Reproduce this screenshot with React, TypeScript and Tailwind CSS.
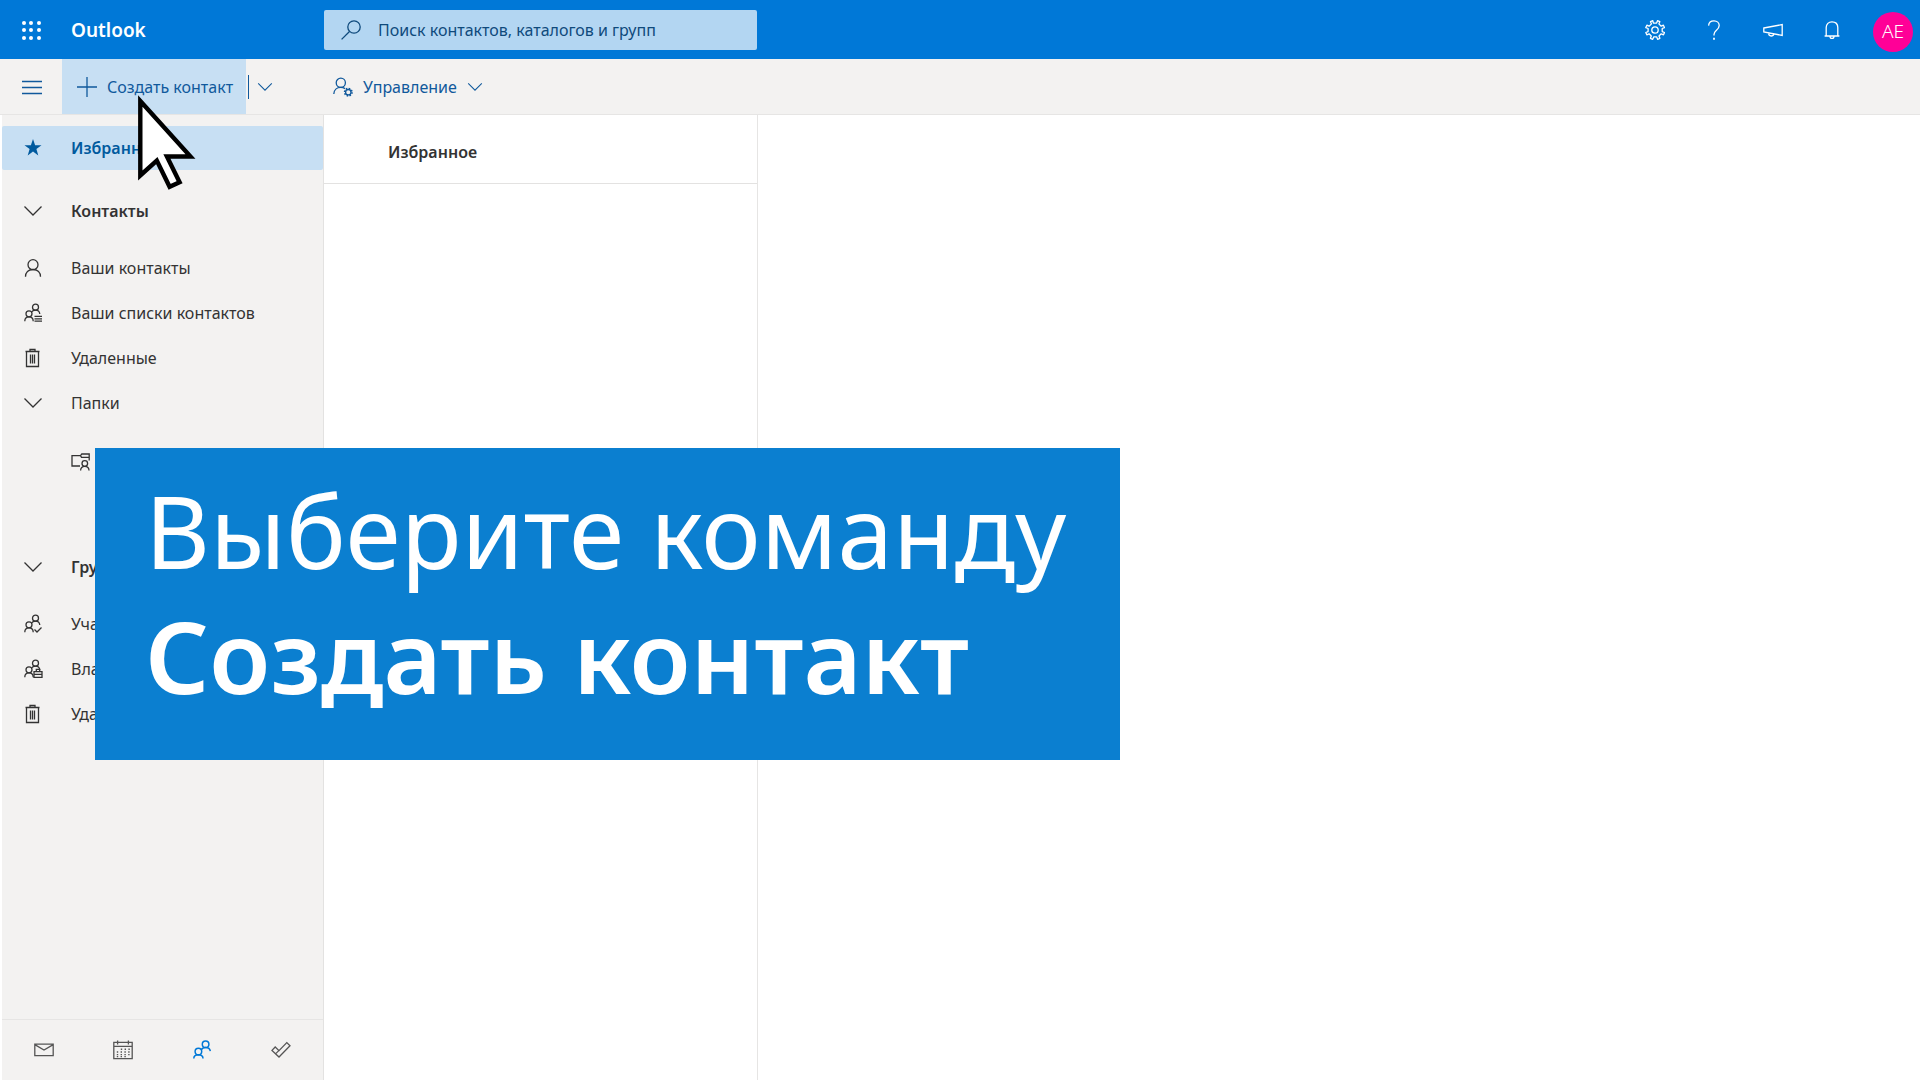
import type { ReactNode } from "react";

function Svg({ children, className = "w-5 h-5" }: { children: ReactNode; className?: string }) {
  return (
    <svg className={`${className} shrink-0`} viewBox="0 0 20 20" fill="none" stroke="currentColor" strokeWidth={1.3} aria-hidden="true">
      {children}
    </svg>
  );
}

const ChevronIcon = ({ className }: { className?: string }) => (
  <Svg className={className}>
    <path d="M1.5 5.5 10 14l8.5-8.5" />
  </Svg>
);

const PersonIcon = () => (
  <Svg>
    <circle cx="10" cy="6.7" r="5" />
    <path d="M2.5 18.8c0-4.2 2.8-7.3 7.5-7.3s7.5 3.1 7.5 7.3" />
  </Svg>
);

// Two overlapping people, shared by several list icons
const PeoplePaths = () => (
  <>
    <circle cx="12.5" cy="4.2" r="3" />
    <circle cx="6" cy="10.8" r="3" />
    <path d="M1.8 18.2c0-2.6 1.6-4.4 4.2-4.4s4.2 1.8 4.2 4.4M8.6 9c.8-1.2 2.2-1.8 3.9-1.8 2.5 0 4 1.4 4.3 3.8" />
  </>
);

const ContactListIcon = () => (
  <Svg>
    <PeoplePaths />
    <path d="M11.5 13.4H19M11.5 15.8H19M11.5 18.2H19" />
  </Svg>
);

const MemberIcon = () => (
  <Svg>
    <PeoplePaths />
    <path d="m11.5 15.5 2.5 2.5 4.5-4.5" />
  </Svg>
);

const OwnerIcon = () => (
  <Svg>
    <PeoplePaths />
    <path d="M11 12.6h8v5.8h-8zM13.3 12.4v-2h3.4v2M11 15.3h8" />
  </Svg>
);

const TrashIcon = () => (
  <Svg>
    <path d="M2.5 3.5h14M7 3.5v-2h5v2M3.5 3.5v15h12v-15M7.5 6.5v9M9.5 6.5v9M11.5 6.5v9" />
  </Svg>
);

const FolderIcon = () => (
  <Svg>
    <path d="M9 14H1V3.6h8.5M9.5 3.6 10.8 2h7.4v6.5M9.5 3.6l1 1.8h7.7" />
    <circle cx="13.8" cy="11.5" r="2.8" />
    <path d="M9.6 18.6c0-2.6 1.6-4.2 4.2-4.2s4.2 1.6 4.2 4.2" />
  </Svg>
);

const StarIcon = () => (
  <svg className="w-5 h-5 shrink-0" viewBox="0 0 20 20" fill="currentColor" aria-hidden="true">
    <path d="m10 1 2.1 6.2h6.4l-5.1 3.9 1.9 6.4-5.3-3.9-5.3 3.9 1.9-6.4-5.1-3.9h6.4z" />
  </svg>
);

const ManageIcon = () => (
  <Svg>
    <circle cx="7.8" cy="5.8" r="4.6" />
    <path d="M.8 17c.2-4 3-6.6 7-6.6 1.6 0 3 .4 4.2 1.2" />
    <circle cx="15.3" cy="15.2" r="2.7" />
    <circle cx="15.3" cy="15.2" r="3.7" strokeWidth={1.6} strokeDasharray="1.5 1.4" />
  </Svg>
);

const SearchIcon = () => (
  <Svg>
    <circle cx="13" cy="7" r="6.2" />
    <path d="M8.5 11.5.6 19.4" />
  </Svg>
);

const GearIcon = () => (
  <Svg>
    <circle cx="10" cy="10" r="3.2" />
    <path
      strokeLinejoin="round"
      d="M8.4 3.1 7.8.7l-2.3 1 1 2.2-2.4 2.3-2.2-1-1.1 2.4 2.3.9v3.1l-2.3.9 1 2.3 2.3-1 2.2 2.2-.9 2.3 2.3 1 1-2.4h3l.9 2.4 2.3-1-.9-2.3 2.2-2.2 2.3 1 1-2.3-2.3-.9V8.5l2.3-.9-1.1-2.4-2.2 1-2.3-2.3.9-2.2-2.3-1-.9 2.4z"
    />
  </Svg>
);

const HelpIcon = () => (
  <Svg>
    <path d="M4.6 5.6C4.8 2.6 7 .8 10 .8s5.2 2 5.2 4.7c0 2.4-1.4 3.6-3 5-1.5 1.3-2.2 2.2-2.2 4.1v1" />
    <path d="M10 17.8v2" strokeWidth={1.8} />
  </Svg>
);

const MegaphoneIcon = () => (
  <Svg>
    <path d="M.8 8 19.2 4.6v10.8L.8 12zM5.6 12.8c0 2 1 3.2 2.6 3.2 1.4 0 2.4-.8 2.6-2.1" />
  </Svg>
);

const BellIcon = () => (
  <Svg>
    <path d="M2.6 16h14.8M4.2 16V7.6C4.2 4 6.6 1.8 10 1.8s5.8 2.2 5.8 5.8V16M8 16.4c0 1.2.8 1.9 2 1.9s2-.7 2-1.9" />
  </Svg>
);

const MailIcon = () => (
  <Svg>
    <path d="M.8 4.2h18.4v11.4H.8zM.8 4.6 10 10l9.2-5.4" />
  </Svg>
);

const CalendarIcon = () => (
  <Svg>
    <path d="M.8 2.4h18.4v16.2H.8zM.8 6.4h18.4M4.6.4v4M15.4.4v4" />
    <path d="M7.8 9.2h9M3.8 12h13M3.8 14.6h13M3.8 16.6h9" strokeDasharray="1.4 2.4" strokeWidth={1.4} />
  </Svg>
);

const PeopleIcon = () => (
  <Svg>
    <g strokeWidth={1.5}>
      <circle cx="13.6" cy="4.2" r="3.3" />
      <circle cx="6.4" cy="11.6" r="3.3" />
      <path d="M1.8 18.6c0-2.4 1.8-3.8 4.6-3.8s4.6 1.4 4.6 3.8M9.4 9.6c.6-1.4 2-2.2 4.2-2.2 2.8 0 4.4 1.2 4.7 3.8" />
    </g>
  </Svg>
);

const TodoIcon = () => (
  <Svg>
    <path d="M1 10.4 4.2 7l3.8 3.6L15.8 2.6 19 5.8 8 17zM4.8 13.6 8 10.4" />
  </Svg>
);

type NavItem = { label: string; icon: ReactNode };

const contactItems: NavItem[] = [
  { label: "Ваши контакты", icon: <PersonIcon /> },
  { label: "Ваши списки контактов", icon: <ContactListIcon /> },
  { label: "Удаленные", icon: <TrashIcon /> },
  { label: "Папки", icon: <ChevronIcon /> },
];

const groupItems: NavItem[] = [
  { label: "Участник", icon: <MemberIcon /> },
  { label: "Владелец", icon: <OwnerIcon /> },
  { label: "Удаленные", icon: <TrashIcon /> },
];

const headerActions: NavItem[] = [
  { label: "Параметры", icon: <GearIcon /> },
  { label: "Справка", icon: <HelpIcon /> },
  { label: "Что нового", icon: <MegaphoneIcon /> },
  { label: "Уведомления", icon: <BellIcon /> },
];

const modules = [
  { label: "Почта", icon: <MailIcon />, active: false },
  { label: "Календарь", icon: <CalendarIcon />, active: false },
  { label: "Люди", icon: <PeopleIcon />, active: true },
  { label: "Задачи", icon: <TodoIcon />, active: false },
];

function NavRow({ label, icon, bold = false }: NavItem & { bold?: boolean }) {
  return (
    <button className={`flex items-center w-full h-[45px] pl-[21px] gap-7 text-left ${bold ? "font-semibold" : ""}`}>
      {icon}
      <span>{label}</span>
    </button>
  );
}

function Header() {
  return (
    <header className="flex items-center h-[59px] bg-[#0078d7] text-white">
      <div className="flex items-center w-[324px] pl-[21px] gap-[30px]">
        <button aria-label="Средство запуска приложений">
          <svg className="w-5 h-5" viewBox="0 0 20 20" fill="currentColor">
            {[3, 10, 18].map((y) => [3, 10, 18].map((x) => <circle key={`${x}-${y}`} cx={x} cy={y} r="2" />))}
          </svg>
        </button>
        <span className="pt-[2px] text-[19px] font-semibold">Outlook</span>
      </div>
      <label className="flex items-center w-[433px] h-10 pl-[17px] gap-[17px] rounded-xs bg-[#b3d6f2] text-[#0f4a7c]">
        <SearchIcon />
        <input
          type="search"
          aria-label="Поиск"
          placeholder="Поиск контактов, каталогов и групп"
          className="flex-1 bg-transparent outline-none placeholder:text-[#0f4a7c]"
        />
      </label>
      <div className="flex items-center ml-auto pr-[7px]">
        {headerActions.map((action) => (
          <button key={action.label} aria-label={action.label} className="flex justify-center w-[59px]">
            {action.icon}
          </button>
        ))}
        <button className="w-10 h-10 mt-1 ml-3 rounded-full bg-[#ff0097] text-[19px] font-light">AE</button>
      </div>
    </header>
  );
}

function CommandBar() {
  return (
    <div className="flex items-center h-14 border-b border-[#e6e5e4] bg-[#f3f2f1] text-[#10599c]">
      <button aria-label="Меню" className="flex justify-center w-[62px] pl-px">
        <Svg>
          <path d="M0 4.5h20M0 10.5h20M0 16.5h20" />
        </Svg>
      </button>
      <button className="flex items-center w-[184px] h-full pl-[15px] gap-[10px] bg-[#c7dff3]">
        <Svg>
          <path d="M10 0v20M0 10h20" />
        </Svg>
        Создать контакт
      </button>
      <button aria-label="Другие варианты" className="flex items-center h-6 ml-[2px] pl-2 border-l border-[#10599c]">
        <ChevronIcon className="w-4 h-4" />
      </button>
      <button className="flex items-center ml-[60px] gap-[10px]">
        <ManageIcon />
        Управление
        <ChevronIcon className="w-4 h-4" />
      </button>
    </div>
  );
}

function Sidebar() {
  return (
    <aside className="flex flex-col w-[324px] shrink-0 pl-[2px] border-r border-[#e3e2e1]">
      <nav className="flex-1 pt-[11px] bg-[#f3f2f1]">
        <button className="flex items-center w-full h-11 pl-[21px] gap-7 rounded-xs bg-[#c7dff3] text-left font-semibold text-[#005a9e]">
          <StarIcon />
          Избранное
        </button>
        <div className="pt-[18px]">
          <NavRow label="Контакты" icon={<ChevronIcon />} bold />
          <div className="pt-3">
            {contactItems.map((item) => (
              <NavRow key={item.label} {...item} />
            ))}
          </div>
          <button aria-label="Папка контактов" className="flex items-center h-[45px] mt-[14px] pl-[69px]">
            <FolderIcon />
          </button>
        </div>
        <div className="pt-[60px]">
          <NavRow label="Группы" icon={<ChevronIcon />} bold />
          <div className="pt-3">
            {groupItems.map((item) => (
              <NavRow key={item.label} {...item} />
            ))}
          </div>
        </div>
      </nav>
      <div className="grid grid-cols-4 h-[61px] px-[2px] border-t border-[#e6e5e4] bg-[#f3f2f1]">
        {modules.map((m) => (
          <button
            key={m.label}
            aria-label={m.label}
            className={`flex items-center justify-center ${m.active ? "text-[#0078d7]" : "text-[#555]"}`}
          >
            {m.icon}
          </button>
        ))}
      </div>
    </aside>
  );
}

export default function App() {
  return (
    <div className="relative flex flex-col min-h-screen bg-white font-['Noto_Sans',sans-serif] text-base text-[#333]">
      <Header />
      <CommandBar />
      <main className="flex flex-1">
        <Sidebar />
        <section className="w-[434px] shrink-0 border-r border-[#e6e5e4]">
          <h2 className="flex items-center h-[69px] pt-[6px] pl-16 border-b border-[#e3e2e1] font-semibold">Избранное</h2>
        </section>
        <section className="flex-1" />
      </main>

      {/* Tutorial caption */}
      <div className="absolute left-[95px] top-[448px] w-[1025px] h-[312px] pt-5 pl-[50px] bg-[#0b7fd0] text-white text-[100px] leading-[125px] whitespace-nowrap">
        <p>Выберите команду</p>
        <p className="font-semibold">Создать контакт</p>
      </div>

      {/* Mouse pointer */}
      <svg className="absolute left-[136px] top-[92px] w-[62px] h-[100px]" viewBox="0 0 62 100" aria-hidden="true">
        <path d="M4.3 9v74.5L20.8 68.5 33.6 94.8 43.6 90.3 30.9 64.5H54.5z" fill="#fff" stroke="#000" strokeWidth="4.4" />
      </svg>
    </div>
  );
}
